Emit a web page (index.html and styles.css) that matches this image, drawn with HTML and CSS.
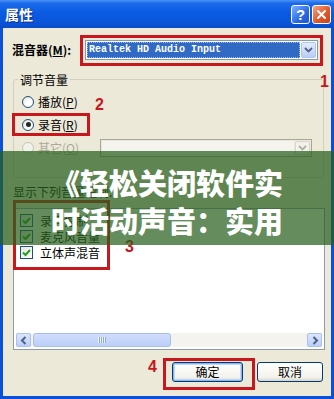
FILE: index.html
```html
<!DOCTYPE html>
<html lang="zh-CN">
<head>
<meta charset="utf-8">
<title>属性</title>
<link rel="stylesheet" href="styles.css">
</head>
<body>
<div class="window">
  <div class="titlebar">
    <span class="title">属性</span>
    <div class="tb-buttons">
      <span class="tb-btn help">?</span>
      <span class="tb-btn close"><svg width="11" height="11" viewBox="0 0 11 11"><path d="M2 2 L9 9 M9 2 L2 9" stroke="#fff" stroke-width="2" stroke-linecap="round"/></svg></span>
    </div>
  </div>
  <div class="content">
    <div class="mixer-row">
      <span class="mixer-label">混音器(<u>M</u>):</span>
      <div class="combo">
        <div class="combo-value">Realtek HD Audio Input</div>
        <div class="combo-arrow"><svg width="9" height="6" viewBox="0 0 9 6"><path d="M1 1 L4.5 4.5 L8 1" fill="none" stroke="#4d6185" stroke-width="1.8"/></svg></div>
      </div>
    </div>
    <fieldset class="group">
      <legend>调节音量</legend>
      <div class="radio-row"><span class="radio"></span><span>播放(<u>P</u>)</span></div>
      <div class="radio-row"><span class="radio checked"></span><span>录音(<u>R</u>)</span></div>
      <div class="radio-row disabled"><span class="radio"></span><span>其它(<u>O</u>)</span>
        <div class="combo combo-off"><div class="combo-value"></div><div class="combo-arrow"><svg width="9" height="6" viewBox="0 0 9 6"><path d="M1 1 L4.5 4.5 L8 1" fill="none" stroke="#b0b0a8" stroke-width="1.8"/></svg></div></div>
      </div>
    </fieldset>
    <div class="list-label">显示下列音量控制:</div>
    <div class="listbox">
      <div class="items">
        <div class="check-row"><span class="check"><svg width="11" height="11" viewBox="0 0 11 11"><path d="M2 5.5 L4.5 8 L9 3" fill="none" stroke="#21a121" stroke-width="2"/></svg></span>录音控制</div>
        <div class="check-row"><span class="check"><svg width="11" height="11" viewBox="0 0 11 11"><path d="M2 5.5 L4.5 8 L9 3" fill="none" stroke="#21a121" stroke-width="2"/></svg></span>麦克风音量</div>
        <div class="check-row"><span class="check"><svg width="11" height="11" viewBox="0 0 11 11"><path d="M2 5.5 L4.5 8 L9 3" fill="none" stroke="#21a121" stroke-width="2"/></svg></span>立体声混音</div>
      </div>
      <div class="hscroll">
        <div class="sb-btn"><svg width="8" height="9" viewBox="0 0 8 9"><path d="M5.5 1 L2 4.5 L5.5 8" fill="none" stroke="#4d6185" stroke-width="2"/></svg></div>
        <div class="sb-thumb"><span class="grip"></span></div>
        <div class="sb-track"></div>
        <div class="sb-btn"><svg width="8" height="9" viewBox="0 0 8 9"><path d="M2.5 1 L6 4.5 L2.5 8" fill="none" stroke="#4d6185" stroke-width="2"/></svg></div>
      </div>
    </div>
    <div class="buttons">
      <button class="btn default">确定</button>
      <button class="btn">取消</button>
    </div>
  </div>

  <div class="mark box1"></div>
  <div class="num n1">1</div>
  <div class="mark box2"></div>
  <div class="num n2">2</div>
  <div class="mark box3"></div>
  <div class="num n3">3</div>
  <div class="mark box4"></div>
  <div class="num n4">4</div>

  <div class="banner">《轻松关闭软件实<br>时活动声音：实用</div>
</div>
</body>
</html>
```
FILE: styles.css
```css
* { box-sizing: border-box; }
html, body { margin: 0; padding: 0; }
body {
  width: 334px;
  height: 399px;
  overflow: hidden;
  font-family: "Noto Sans CJK SC", "Liberation Sans", sans-serif;
  font-size: 12px;
  color: #000;
}
.window {
  position: relative;
  width: 334px;
  height: 399px;
  background: #0b50d8;
  display: flex;
  flex-direction: column;
}
.titlebar {
  height: 28px;
  flex: none;
  display: flex;
  align-items: center;
  padding: 0 3px 0 5px;
  background: linear-gradient(#4a92f6 0%, #1a6aea 12%, #0b5be2 45%, #0a55da 80%, #0a4cc8 100%);
}
.title {
  flex: 1;
  color: #fff;
  font-weight: 700;
  font-size: 14px;
  line-height: 16px;
  text-shadow: 1px 1px 0 #0a2f8e;
}
.tb-buttons { display: flex; gap: 2px; }
.tb-btn {
  width: 19px;
  height: 19px;
  border: 1px solid #fff;
  border-radius: 3px;
  display: flex;
  align-items: center;
  justify-content: center;
  color: #fff;
  font-weight: 700;
}
.help {
  background: linear-gradient(135deg, #7fb0ff, #2a68e4 60%, #1d55d0);
  font-family: "Liberation Sans", sans-serif;
  font-size: 15px;
  line-height: 17px;
}
.close { background: linear-gradient(135deg, #f4a384, #e0592b 55%, #c8431a); }

.content {
  flex: 1;
  margin: 0 3px 3px;
  background: #ece9d8;
  display: flex;
  flex-direction: column;
}
.mixer-row {
  display: flex;
  align-items: center;
  height: 20px;
  margin-top: 12px;
}
.mixer-label {
  width: 82px;
  padding-left: 9px;
  font-weight: 700;
  line-height: 16px;
}
.combo {
  width: 233px;
  height: 20px;
  border: 1px solid #7f9db9;
  background: #fff;
  display: flex;
  padding: 1px;
  gap: 1px;
}
.combo-value {
  flex: 1;
  background: #316ac5;
  color: #fff;
  font-family: "Liberation Mono", monospace;
  font-size: 10px;
  font-weight: 700;
  line-height: 16px;
  padding-left: 2px;
  outline: 1px dotted #9fb8e6;
  outline-offset: -1px;
}
.combo-arrow {
  width: 15px;
  background: linear-gradient(#e3ecfe, #b9cdf8);
  border: 1px solid #b0c4f2;
  border-radius: 2px;
  display: flex;
  align-items: center;
  justify-content: center;
}

.group {
  margin: 11px 7px 0 10px;
  padding: 2px 11px 18px 8px;
  border: 1px solid #d0d0bf;
  border-radius: 3px;
}
.group legend {
  padding: 0 2px;
  margin-left: -4px;
  line-height: 17px;
}
.radio-row {
  display: flex;
  align-items: center;
  height: 23px;
  gap: 4px;
}
.radio {
  width: 12px;
  height: 12px;
  border-radius: 50%;
  border: 1px solid #1c5180;
  background: radial-gradient(circle at 65% 65%, #fff 30%, #dedcd0);
  display: flex;
  align-items: center;
  justify-content: center;
}
.radio.checked::after {
  content: "";
  width: 5px;
  height: 5px;
  border-radius: 50%;
  background: #1e2a1e;
}
.radio-row.disabled { color: #aca899; }
.radio-row.disabled .radio { border-color: #c9c7ba; background: #f2f1ea; }
.combo-off {
  width: 212px;
  height: 18px;
  margin-left: auto;
  background: #ece9d8;
  border-color: #a8a698;
}
.combo-off .combo-value { background: #f4f3ee; outline: none; }
.combo-off .combo-arrow { background: #f2f1ea; border-color: #d8d6cc; }

.list-label {
  margin-top: 6px;
  padding-left: 10px;
  line-height: 16px;
}
.listbox {
  margin: 8px 0 0 10px;
  width: 312px;
  height: 142px;
  border: 1px solid #8a9cae;
  background: #fff;
  display: flex;
  flex-direction: column;
}
.items {
  flex: 1;
  padding: 3px 0 0 6px;
}
.check-row {
  display: flex;
  align-items: center;
  height: 16px;
  gap: 7px;
}
.check {
  width: 13px;
  height: 13px;
  border: 1px solid #1c5180;
  background: linear-gradient(135deg, #e6e6de, #fff);
  display: flex;
  align-items: center;
  justify-content: center;
}
.hscroll {
  height: 14px;
  margin: 0 2px 2px;
  display: flex;
  background: #f4f3ef;
}
.sb-btn {
  width: 15px;
  background: linear-gradient(#dbe6fe, #bbcff9);
  border: 1px solid #aac0ec;
  border-radius: 2px;
  display: flex;
  align-items: center;
  justify-content: center;
}
.sb-thumb {
  width: 138px;
  margin-left: 2px;
  background: linear-gradient(#d0ddfd, #bccff8);
  border: 1px solid #a9bde9;
  border-radius: 3px;
  display: flex;
  align-items: center;
  justify-content: center;
}
.grip {
  width: 8px;
  height: 6px;
  background: repeating-linear-gradient(90deg, #eef3ff 0 1px, #8fa8de 1px 2px);
}
.sb-track { flex: 1; }

.buttons {
  margin-top: 12px;
  display: flex;
  justify-content: flex-end;
  gap: 14px;
  padding-right: 8px;
}
.btn {
  width: 66px;
  height: 20px;
  padding: 0;
  border: 1px solid #003c74;
  border-radius: 3px;
  background: linear-gradient(#ffffff, #f3f2ec 80%, #d8d3c6);
  font-family: "Noto Sans CJK SC", sans-serif;
  font-size: 12px;
  line-height: 16px;
  color: #000;
}
.btn.default {
  width: 71px;
  box-shadow: inset 0 0 0 1px #8eb3ee, inset 0 0 0 2px #c3d7f9;
}

.mark {
  position: absolute;
  border: 3px solid #c8171d;
}
.box1 { left: 80px; top: 35px; width: 243px; height: 31px; }
.box2 { left: 12px; top: 113px; width: 78px; height: 23px; }
.box3 { left: 13px; top: 200px; width: 97px; height: 70px; }
.box4 { left: 163px; top: 358px; width: 92px; height: 32px; }
.num {
  position: absolute;
  color: #c8171d;
  font-family: "Liberation Sans", sans-serif;
  font-weight: 700;
  font-size: 16px;
  line-height: 16px;
}
.n1 { left: 320px; top: 74px; }
.n2 { left: 95px; top: 97px; }
.n3 { left: 125px; top: 239px; }
.n4 { left: 148px; top: 359px; }

.banner {
  position: absolute;
  left: 0;
  top: 151px;
  width: 334px;
  height: 94px;
  padding-top: 12px;
  background: rgba(40, 95, 30, 0.72);
  color: #fff;
  text-align: center;
  font-family: "Noto Sans CJK SC", sans-serif;
  font-weight: 900;
  font-size: 29px;
  line-height: 38px;
}
```
